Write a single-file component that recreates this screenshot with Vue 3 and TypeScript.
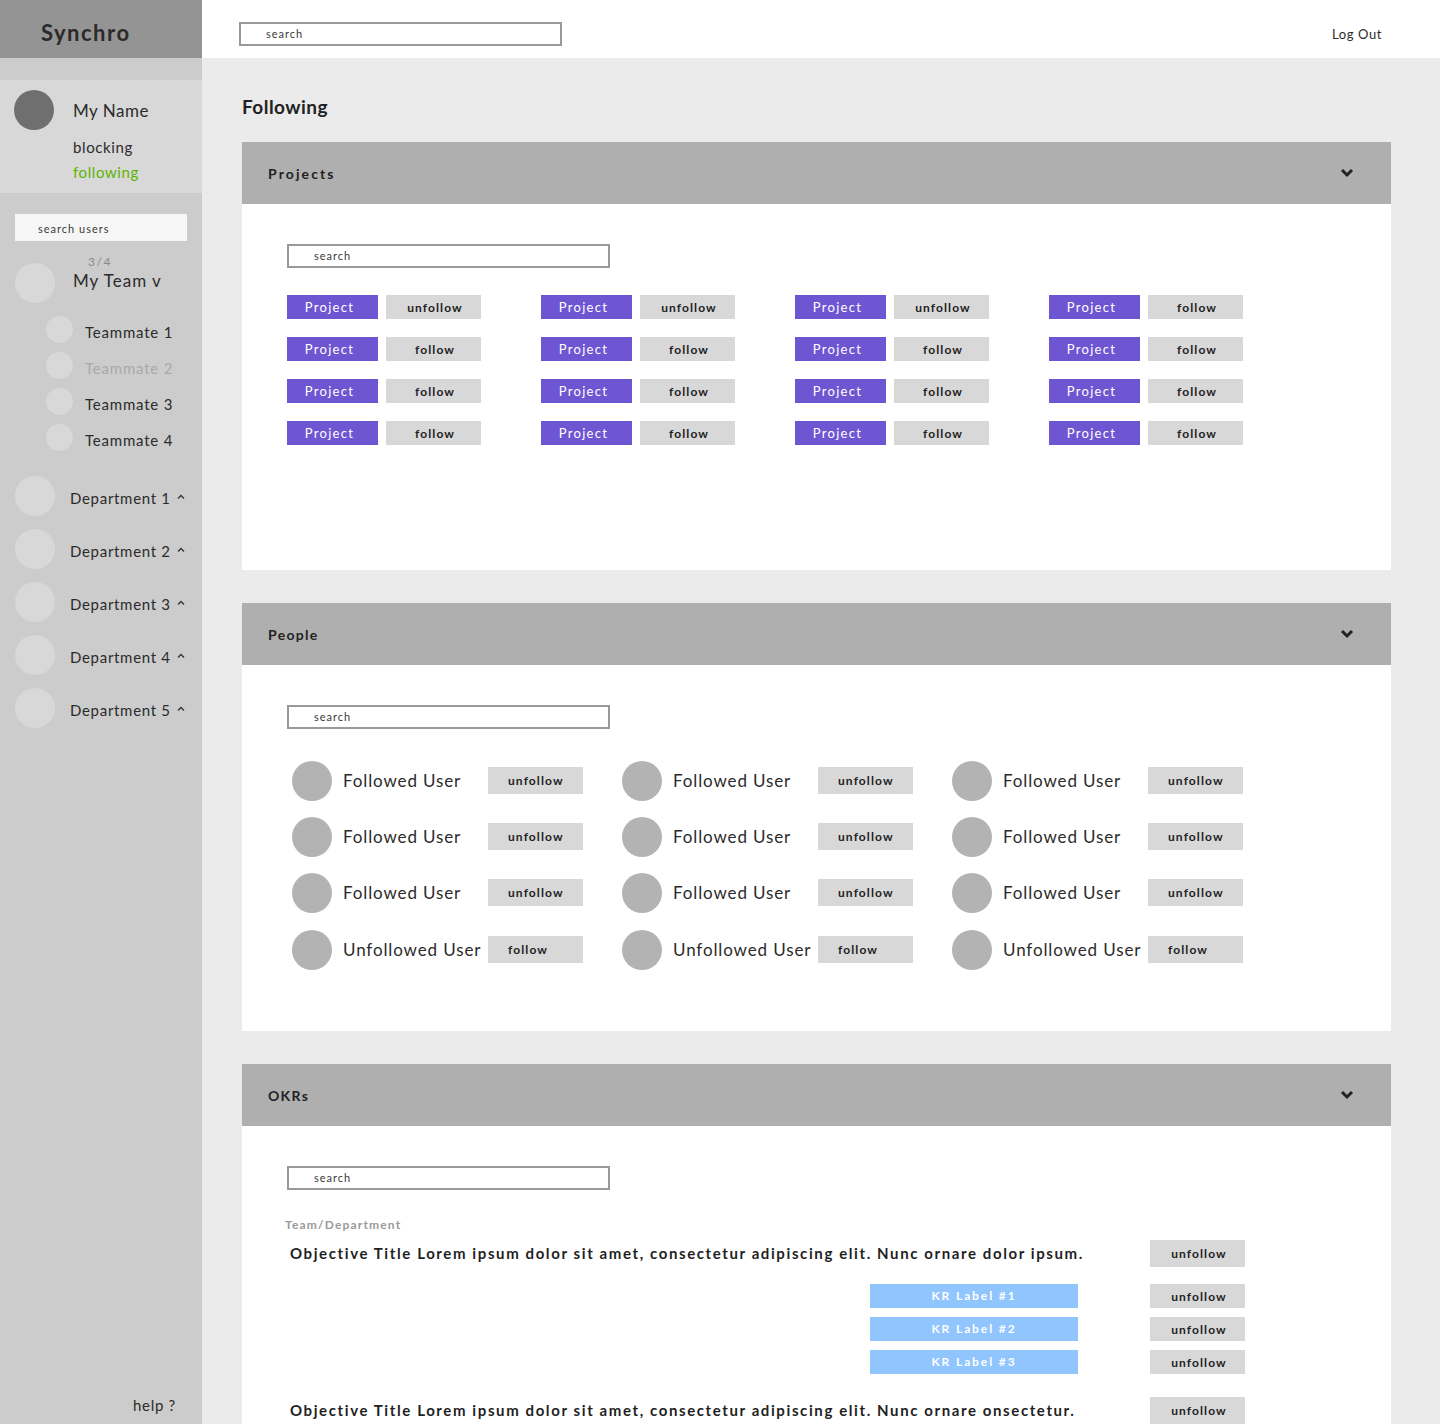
<script setup lang="ts">
const teammates = [
  { name: 'Teammate 1', off: false },
  { name: 'Teammate 2', off: true },
  { name: 'Teammate 3', off: false },
  { name: 'Teammate 4', off: false },
]
const departments = ['Department 1', 'Department 2', 'Department 3', 'Department 4', 'Department 5']

// four columns of four rows, only the first row differs
const projectRows = [
  ['unfollow', 'unfollow', 'unfollow', 'follow'],
  ['follow', 'follow', 'follow', 'follow'],
  ['follow', 'follow', 'follow', 'follow'],
  ['follow', 'follow', 'follow', 'follow'],
]
const people = [
  'Followed User', 'Followed User', 'Followed User',
  'Followed User', 'Followed User', 'Followed User',
  'Followed User', 'Followed User', 'Followed User',
  'Unfollowed User', 'Unfollowed User', 'Unfollowed User',
]
const krs = ['KR Label #1', 'KR Label #2', 'KR Label #3']
</script>

<template>
  <div class="page">
    <aside class="sidebar">
      <div class="brand">Synchro</div>
      <div class="profile">
        <span class="avatar dark"></span>
        <div class="profile-text">
          <div class="my-name">My Name</div>
          <div class="profile-link">blocking</div>
          <div class="profile-link active">following</div>
        </div>
      </div>
      <div class="user-search">search users</div>
      <div class="team-row">
        <span class="avatar light"></span>
        <div class="team-text">
          <div class="team-count">3/4</div>
          <div class="team-name">My Team v</div>
        </div>
      </div>
      <div class="teammates">
        <div v-for="t in teammates" :key="t.name" class="teammate">
          <span class="avatar small"></span>
          <span class="teammate-name" :class="{ off: t.off }">{{ t.name }}</span>
        </div>
      </div>
      <div class="departments">
        <div v-for="d in departments" :key="d" class="department">
          <span class="avatar light"></span>
          <span class="department-name">{{ d }}</span>
          <svg class="caret" width="8" height="6" viewBox="0 0 8 6">
            <path d="M1 4.5 L4 1.5 L7 4.5" fill="none" stroke="#333" stroke-width="1.3" />
          </svg>
        </div>
      </div>
      <div class="help">help ?</div>
    </aside>

    <div class="content">
      <header class="topbar">
        <div class="search">search</div>
        <span class="logout">Log Out</span>
      </header>

      <main class="main">
        <h1 class="title">Following</h1>

        <section class="panel">
          <div class="panel-head">
            <span class="wide">Projects</span>
            <svg class="chevron" width="14" height="10" viewBox="0 0 14 10">
              <path d="M2 2 L7 7 L12 2" fill="none" stroke="#222" stroke-width="3" />
            </svg>
          </div>
          <div class="panel-body">
            <div class="search">search</div>
            <div class="project-grid">
              <template v-for="(row, r) in projectRows" :key="r">
                <div v-for="(state, c) in row" :key="c" class="project-cell">
                  <span class="project">Project</span>
                  <span class="btn">{{ state }}</span>
                </div>
              </template>
            </div>
          </div>
        </section>

        <section class="panel">
          <div class="panel-head">
            <span>People</span>
            <svg class="chevron" width="14" height="10" viewBox="0 0 14 10">
              <path d="M2 2 L7 7 L12 2" fill="none" stroke="#222" stroke-width="3" />
            </svg>
          </div>
          <div class="panel-body">
            <div class="search">search</div>
            <div class="people-grid">
              <div v-for="(p, i) in people" :key="i" class="person">
                <span class="avatar grey"></span>
                <span class="person-name">{{ p }}</span>
                <span class="btn tall left">{{ p === 'Followed User' ? 'unfollow' : 'follow' }}</span>
              </div>
            </div>
          </div>
        </section>

        <section class="panel last">
          <div class="panel-head">
            <span>OKRs</span>
            <svg class="chevron" width="14" height="10" viewBox="0 0 14 10">
              <path d="M2 2 L7 7 L12 2" fill="none" stroke="#222" stroke-width="3" />
            </svg>
          </div>
          <div class="panel-body">
            <div class="search">search</div>
            <div class="team-label">Team/Department</div>
            <div class="objective">
              <span class="objective-title">Objective Title Lorem ipsum dolor sit amet, consectetur adipiscing elit. Nunc ornare dolor ipsum.</span>
              <span class="btn tall">unfollow</span>
            </div>
            <div class="kr-list">
              <div v-for="kr in krs" :key="kr" class="kr">
                <span class="kr-label">{{ kr }}</span>
                <span class="btn">unfollow</span>
              </div>
            </div>
            <div class="objective second">
              <span class="objective-title">Objective Title Lorem ipsum dolor sit amet, consectetur adipiscing elit. Nunc ornare onsectetur.</span>
              <span class="btn tall">unfollow</span>
            </div>
          </div>
        </section>
      </main>
    </div>
  </div>
</template>

<style>
html, body {
  margin: 0;
  background: #ebebeb;
}
</style>

<style scoped>
.page {
  display: flex;
  height: 1424px;
  overflow: hidden;
  font-family: "Lato", "Noto Sans", sans-serif;
  color: #2b2b2b;
}

/* sidebar */
.sidebar {
  width: 202px;
  flex-shrink: 0;
  display: flex;
  flex-direction: column;
  background: #cccccc;
}
.brand {
  height: 58px;
  flex-shrink: 0;
  box-sizing: border-box;
  padding: 20px 0 0 41px;
  background: #949494;
  font-size: 22px;
  line-height: 26px;
  font-weight: 700;
  letter-spacing: 1.5px;
  color: #2a2a2a;
}
.profile {
  margin-top: 22px;
  height: 113px;
  box-sizing: border-box;
  padding: 10px 0 0 14px;
  display: flex;
  gap: 19px;
  background: #d8d8d8;
}
.avatar {
  display: block;
  flex-shrink: 0;
  width: 40px;
  height: 40px;
  border-radius: 50%;
}
.avatar.dark { background: #6f6f6f; }
.avatar.light { background: #d8d8d8; }
.avatar.grey { background: #b3b3b3; }
.avatar.small {
  width: 27px;
  height: 27px;
  background: #d8d8d8;
}
.my-name {
  margin-top: 10px;
  font-size: 17px;
  line-height: 22px;
  letter-spacing: 0.5px;
}
.profile-link {
  font-size: 15px;
  line-height: 25px;
  letter-spacing: 0.6px;
}
.my-name + .profile-link { margin-top: 13px; }
.profile-link.active { color: #5ab500; }
.user-search {
  margin: 21px 15px 0;
  height: 27px;
  box-sizing: border-box;
  padding-left: 23px;
  background: #f6f6f6;
  font-size: 11px;
  line-height: 29px;
  letter-spacing: 1px;
  color: #3a3a3a;
}
.team-row {
  margin-top: 22px;
  padding-left: 15px;
  display: flex;
  gap: 18px;
}
.team-text { margin-top: -8px; }
.team-count {
  padding-left: 15px;
  font-size: 12px;
  line-height: 14px;
  letter-spacing: 1.5px;
  color: #8a8a8a;
}
.team-name {
  padding-top: 1px;
  font-size: 17px;
  line-height: 22px;
  letter-spacing: 1px;
}
.teammates {
  margin-top: 13px;
  padding-left: 46px;
  display: flex;
  flex-direction: column;
  gap: 9px;
}
.teammate {
  display: flex;
  align-items: center;
  gap: 12px;
  height: 27px;
}
.teammate-name {
  padding-top: 4px;
  font-size: 15px;
  letter-spacing: 0.8px;
}
.teammate-name.off { color: #a9a9a9; }
.departments {
  margin-top: 25px;
  padding-left: 15px;
  display: flex;
  flex-direction: column;
  gap: 13px;
}
.department {
  display: flex;
  align-items: center;
  height: 40px;
}
.department-name {
  margin-left: 15px;
  padding-top: 4px;
  font-size: 15px;
  letter-spacing: 0.7px;
  white-space: nowrap;
}
.caret {
  margin-left: 6px;
  margin-top: 1px;
}
.help {
  margin-top: auto;
  padding: 0 26px 9px 0;
  text-align: right;
  font-size: 15px;
  line-height: 20px;
  letter-spacing: 0.7px;
}

/* top bar */
.content {
  flex: 1;
  min-width: 0;
  display: flex;
  flex-direction: column;
}
.topbar {
  height: 58px;
  flex-shrink: 0;
  box-sizing: border-box;
  padding: 10px 58px 0 37px;
  display: flex;
  align-items: center;
  justify-content: space-between;
  background: #fff;
}
.logout {
  font-size: 13px;
  letter-spacing: 0.6px;
}
.search {
  width: 323px;
  height: 24px;
  box-sizing: border-box;
  padding-left: 25px;
  border: 2px solid #999;
  background: #fff;
  font-size: 11px;
  line-height: 20px;
  letter-spacing: 1px;
  color: #3a3a3a;
}

/* panels */
.main {
  padding-left: 40px;
  width: 1189px;
  box-sizing: border-box;
}
.title {
  margin: 0;
  padding-top: 37px;
  height: 84px;
  box-sizing: border-box;
  font-size: 19px;
  line-height: 24px;
  font-weight: 700;
  letter-spacing: 0.45px;
  color: #222;
}
.panel {
  margin-bottom: 33px;
  background: #fff;
}
.panel-head {
  height: 62px;
  box-sizing: border-box;
  padding: 0 37px 0 26px;
  display: flex;
  align-items: center;
  justify-content: space-between;
  background: #afafaf;
  font-size: 14px;
  font-weight: 700;
  letter-spacing: 1.3px;
  color: #222;
}
.panel-head .wide { letter-spacing: 2.1px; }
.panel-body {
  height: 366px;
  box-sizing: border-box;
  padding: 40px 0 0 45px;
}
.panel.last .panel-body { height: auto; padding-bottom: 40px; }

.project-grid {
  margin-top: 27px;
  display: grid;
  grid-template-columns: repeat(4, 254px);
  row-gap: 18px;
}
.project-cell {
  display: flex;
  gap: 8px;
}
.project {
  width: 91px;
  height: 24px;
  box-sizing: border-box;
  padding-right: 6px;
  text-align: center;
  background: #6e55d2;
  color: #fff;
  font-size: 13px;
  line-height: 24px;
  letter-spacing: 1.3px;
}
.btn {
  width: 95px;
  height: 24px;
  flex-shrink: 0;
  box-sizing: border-box;
  padding-left: 3px;
  text-align: center;
  background: #d8d8d8;
  color: #222;
  font-size: 12px;
  font-weight: 700;
  line-height: 25px;
  letter-spacing: 1.1px;
}
.btn.tall {
  height: 27px;
  line-height: 27px;
}
.btn.left {
  padding-left: 20px;
  text-align: left;
}

.people-grid {
  margin-top: 32px;
  padding-left: 5px;
  display: grid;
  grid-template-columns: repeat(3, 330px);
  row-gap: 16px;
}
.person {
  display: flex;
  align-items: center;
  height: 40px;
}
.person .btn { margin-bottom: 2px; }
.person:nth-child(n + 10) { margin-top: 1px; }
.person-name {
  width: 145px;
  flex-shrink: 0;
  margin-left: 11px;
  margin-bottom: 1px;
  font-size: 17px;
  letter-spacing: 0.88px;
  white-space: nowrap;
}

.team-label {
  margin: 27px 0 0 -2px;
  font-size: 12px;
  font-weight: 700;
  line-height: 16px;
  letter-spacing: 1.17px;
  color: #9a9a9a;
}
.objective {
  margin-top: 7px;
  display: flex;
  align-items: center;
  padding-left: 3px;
}
.objective.second { margin-top: 23px; }
.objective-title {
  width: 860px;
  flex-shrink: 0;
  margin-bottom: 2px;
  font-size: 15px;
  font-weight: 700;
  letter-spacing: 1.6px;
  white-space: nowrap;
  color: #1f1f1f;
}
.kr-list {
  margin-top: 17px;
  padding-left: 583px;
  display: flex;
  flex-direction: column;
  gap: 9px;
}
.kr {
  display: flex;
  gap: 72px;
}
.kr-label {
  width: 208px;
  height: 24px;
  box-sizing: border-box;
  text-align: center;
  background: #90c5fe;
  color: #fff;
  font-size: 12px;
  font-weight: 700;
  line-height: 24px;
  letter-spacing: 1.9px;
}
</style>
